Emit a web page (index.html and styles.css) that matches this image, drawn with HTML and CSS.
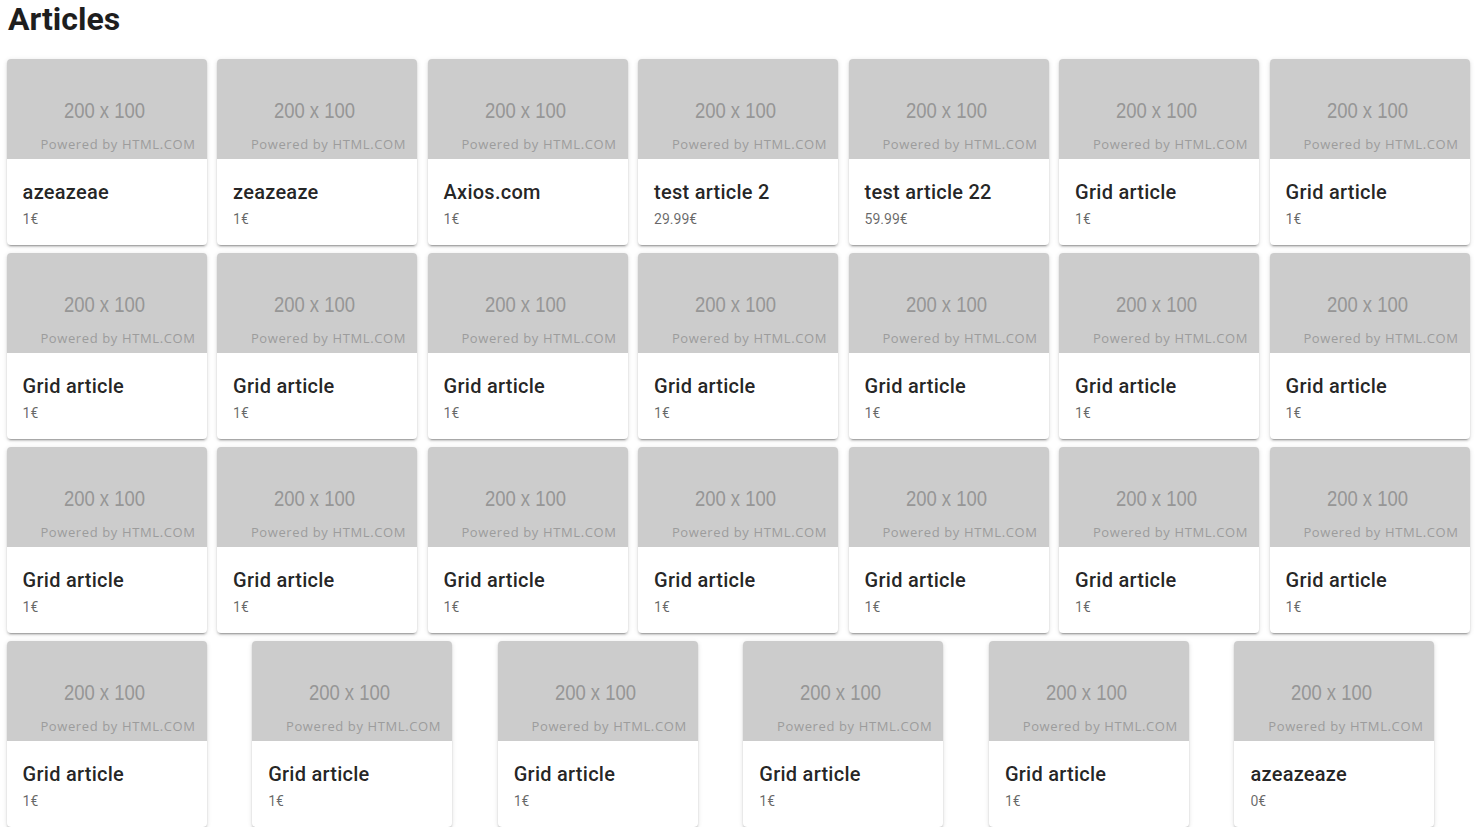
FILE: index.html
```html
<!DOCTYPE html>
<html lang="en">
<head>
<meta charset="utf-8">
<title>Articles</title>
<link rel="stylesheet" href="styles.css">
</head>
<body>
<h1 class="page-title">Articles</h1>
<div class="grid" id="grid"></div>
<script src="app.js"></script>
</body>
</html>
```
FILE: styles.css
```css
* { box-sizing: border-box; }
body {
  margin: 0;
  font-family: Roboto, "Noto Sans", sans-serif;
  color: rgba(0,0,0,.87);
  background: #fff;
}
.page-title {
  margin: 0 0 21px 0;
  padding: 0 8px;
  font-size: 32px;
  line-height: 38px;
  font-weight: 700;
  color: #1e1e1e;
}
.grid {
  display: flex;
  flex-wrap: wrap;
  width: 1473.5px;
  margin-left: 6.6px;
  row-gap: 8px;
}
.cell {
  flex: 1 1 200px;
}
.card {
  width: 200px;
  background: #fff;
  border-radius: 4px;
  overflow: hidden;
  box-shadow: 0 3px 1px -2px rgba(0,0,0,.2), 0 2px 2px 0 rgba(0,0,0,.14), 0 1px 5px 0 rgba(0,0,0,.12);
}
.thumb {
  height: 100px;
  background: #cccccc;
  display: flex;
  flex-direction: column;
  color: #969696;
}
.thumb-size {
  font-family: "Liberation Sans", Arial, sans-serif;
  font-size: 22px;
  line-height: 22px;
  padding-top: 41px;
  padding-right: 6px;
  text-align: center;
  transform: scaleX(0.84);
}
.thumb-credit {
  margin-top: auto;
  font-family: "Open Sans", sans-serif;
  font-size: 13px;
  line-height: 14px;
  padding: 0 11px 8px 0;
  text-align: right;
  letter-spacing: 0.62px;
  color: #9c9c9c;
}
.card-title {
  padding: 17px 16px 0;
  font-size: 20px;
  line-height: 32px;
  font-weight: 500;
  letter-spacing: .0125em;
  color: rgba(0,0,0,.87);
}
.card-price {
  padding: 0 16px 15px;
  font-size: 14px;
  line-height: 22px;
  color: rgba(0,0,0,.6);
}
```
FILE: app.js
```js
const items = [
  ["azeazeae","1€"],["zeazeaze","1€"],["Axios.com","1€"],["test article 2","29.99€"],["test article 22","59.99€"],["Grid article","1€"],["Grid article","1€"]
];
for (let i = 0; i < 19; i++) items.push(["Grid article","1€"]);
items.push(["azeazeaze","0€"]);
const grid = document.getElementById("grid");
items.forEach(([t,p]) => {
  const cell = document.createElement("div");
  cell.className = "cell";
  cell.innerHTML = '<div class="card"><div class="thumb"><div class="thumb-size">200 x 100</div><div class="thumb-credit">Powered by HTML.COM</div></div><div class="card-title"></div><div class="card-price"></div></div>';
  cell.querySelector(".card-title").textContent = t;
  cell.querySelector(".card-price").textContent = p;
  grid.appendChild(cell);
});
```
